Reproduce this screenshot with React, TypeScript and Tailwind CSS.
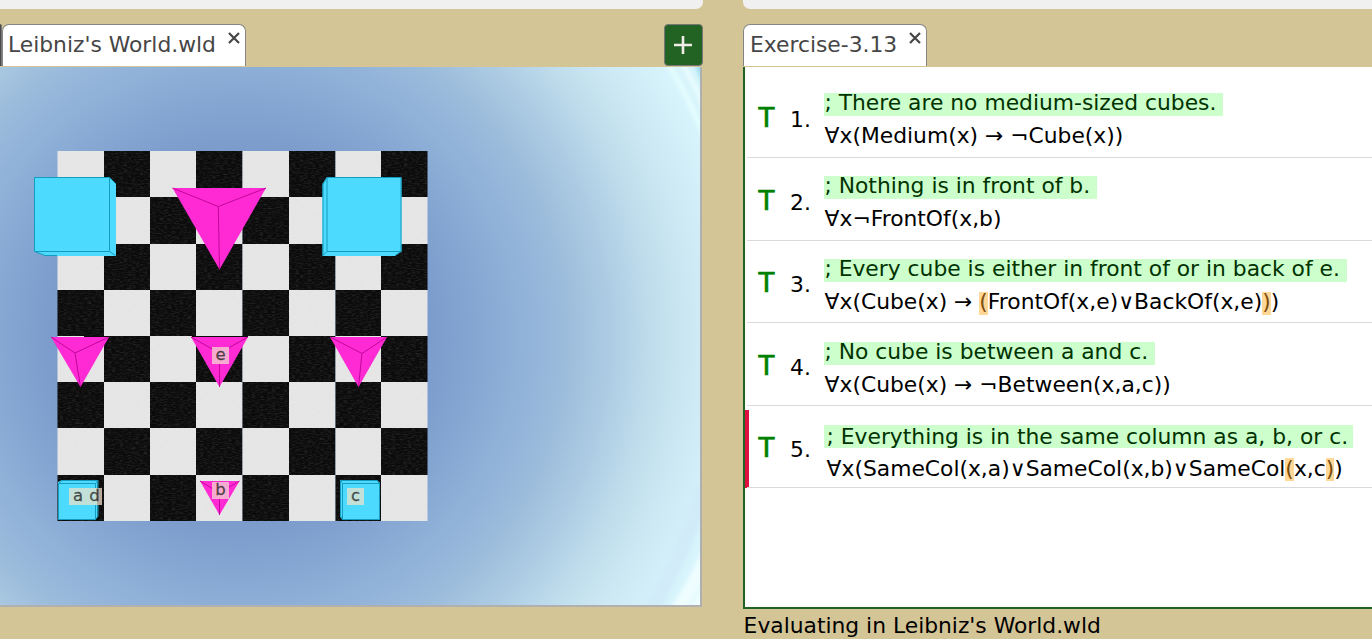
import React from "react";

type Part = { text: string; match?: boolean };
type Sentence = { comment: string; formula: Part[]; active?: boolean };

const sentences: Sentence[] = [
  { comment: "; There are no medium-sized cubes.", formula: [{ text: "∀x(Medium(x) → ¬Cube(x))" }] },
  { comment: "; Nothing is in front of b.", formula: [{ text: "∀x¬FrontOf(x,b)" }] },
  {
    comment: "; Every cube is either in front of or in back of e.",
    formula: [
      { text: "∀x(Cube(x) → " },
      { text: "(", match: true },
      { text: "FrontOf(x,e)∨BackOf(x,e)" },
      { text: ")", match: true },
      { text: ")" },
    ],
  },
  { comment: "; No cube is between a and c.", formula: [{ text: "∀x(Cube(x) → ¬Between(x,a,c))" }] },
  {
    comment: "; Everything is in the same column as a, b, or c.",
    formula: [
      { text: "∀x(SameCol(x,a)∨SameCol(x,b)∨SameCol" },
      { text: "(", match: true },
      { text: "x,c" },
      { text: ")", match: true },
      { text: ")" },
    ],
    active: true,
  },
];

const rowHeights = ["h-[91px]", "h-[83px]", "h-[82px]", "h-[83px]", "h-[82px]"];
const rowPads = ["pt-[26px]", "pt-[18px]", "pt-[18px]", "pt-[19px]", "pt-[19px]"];
const numberLeading = ["leading-[54px]", "leading-[54px]", "leading-[52px]", "leading-[52px]", "leading-[49px]"];
const valueLeading = ["leading-[50px]", "leading-[50px]", "leading-[48px]", "leading-[48px]", "leading-[46px]"];

const colEdges = [57.5, 104, 150, 196, 242.5, 289, 335.5, 381, 427.5];
const rowEdges = [84, 130, 177, 223, 269, 315, 361, 408, 454];

function Tetra({ pts, apex }: { pts: [number, number][]; apex: [number, number] }) {
  return (
    <g>
      <polygon points={pts.map((p) => p.join(",")).join(" ")} fill="#ff2ad4" />
      {pts.map((p, i) => (
        <line key={i} x1={p[0]} y1={p[1]} x2={apex[0]} y2={apex[1]} stroke="#c0069a" strokeWidth="1" />
      ))}
    </g>
  );
}

function Scene() {
  return (
    <svg className="block" width="700" height="538" viewBox="0 0 700 538">
      <defs>
        <radialGradient id="sky" gradientUnits="userSpaceOnUse" cx="240" cy="269" r="500">
          <stop offset="0.36" stopColor="#7a9bcb" />
          <stop offset="0.46" stopColor="#84a5d1" />
          <stop offset="0.56" stopColor="#90b1d8" />
          <stop offset="0.66" stopColor="#9dbddc" />
          <stop offset="0.74" stopColor="#adcce3" />
          <stop offset="0.82" stopColor="#bfdcec" />
          <stop offset="0.9" stopColor="#cce8f3" />
          <stop offset="1" stopColor="#d7f4fc" />
        </radialGradient>
        <filter id="soft" x="-50%" y="-20%" width="200%" height="140%">
          <feGaussianBlur stdDeviation="2.2" />
        </filter>
        <filter id="grain" x="0" y="0" width="100%" height="100%" colorInterpolationFilters="sRGB">
          <feTurbulence type="fractalNoise" baseFrequency="0.25 0.8" numOctaves="2" seed="4" />
          <feColorMatrix values="0 0 0 0 1  0 0 0 0 1  0 0 0 0 1  0.24 0 0 0 -0.1" />
        </filter>
      </defs>
      <rect width="700" height="538" fill="url(#sky)" />
      <g fill="none" filter="url(#soft)">
        <path d="M667 -5 Q689 30 703 66" stroke="#e6feff" strokeWidth="5" />
        <path d="M681 -5 Q695 17 705 43" stroke="#effeff" strokeWidth="4" />
        <path d="M697 -5 L706 18" stroke="#83d5ed" strokeWidth="4" />
        <path d="M704 420 Q684 490 650 545" stroke="#cfeaf8" strokeWidth="14" opacity="0.8" />
        <path d="M706 472 Q692 510 667 546 H712 V472Z" fill="#effdff" />
        <path d="M707 504 Q700 523 686 544" stroke="#dff8fd" strokeWidth="3" />
      </g>
      <g>
        {rowEdges.slice(0, 8).map((y, r) =>
          colEdges.slice(0, 8).map((x, c) => (
            <rect
              key={`${r}-${c}`}
              x={x}
              y={y}
              width={colEdges[c + 1] - x}
              height={rowEdges[r + 1] - y}
              fill={(r + c) % 2 === 0 ? "#e5e5e5" : "#0b0b0b"}
            />
          )),
        )}
      </g>
      <rect x="58" y="84" width="369" height="370" filter="url(#grain)" />
      <g strokeWidth="1" stroke="#159bbd" fill="#4cdbff">
        <path d="M34 110.500 H109.500 L116 117 V189 H46 L34 184.500Z" stroke="none" />
        <path d="M34.500 110.500 H109.500 V184.500 H34.500Z" />
        <path d="M109.500 110.500 L116 117 M109.500 184.500 L115.500 188.500 M34.500 184.500 L45 188.500 H57" fill="none" />
        <path d="M322.500 117 L326.500 110.500 H401.500 V184.500 L395 189 H322.500Z" stroke="none" />
        <path d="M327 110.500 H401 V184.500 H327Z" />
        <path d="M327 110.500 L323 117 V188.500 L327 184.500 M401 184.500 L395 188.500" fill="none" />
        <path d="M58 415 L62 413 H97.500 V449.500 L95.500 452.500 H58Z" stroke="none" />
        <path d="M58.500 416.500 H95.500 V452.500 H58.500Z" />
        <path d="M58.500 416.500 L62 413.500 H98 L95.500 416.500 M98 413.500 V449 L95.500 452.500" fill="none" />
        <path d="M340 413 H377 L380 416 V452.500 H342 L340 449.500Z" stroke="none" />
        <path d="M342.500 416.500 H379.500 V452.500 H342.500Z" />
        <path d="M342.500 416.500 L340.500 413.500 H377 L379.500 416.500 M340.500 413.500 V449 L342.500 452.500" fill="none" />
      </g>
      <path d="M84 269.500 H109 M192 269.500 H248" stroke="#0b0b0b" />
      <Tetra pts={[[172.5, 121], [266, 121], [219.500, 202.500]]} apex={[218.300, 139.500]} />
      <Tetra pts={[[51, 270], [109, 270], [80.500, 320]]} apex={[75, 286]} />
      <Tetra pts={[[191, 270], [248, 270], [219.500, 320]]} apex={[219.500, 286]} />
      <Tetra pts={[[330, 270], [387, 270], [358.500, 320]]} apex={[362, 286.500]} />
      <Tetra pts={[[200, 414], [239.500, 414], [219.500, 448]]} apex={[219.500, 426]} />
    </svg>
  );
}

const tag =
  "absolute flex items-center h-[17px] text-[16.5px] leading-none text-[#202020]/75 font-['DejaVu_Sans',sans-serif] whitespace-pre [-webkit-text-stroke:0.3px]";

function CloseIcon({ className }: { className: string }) {
  return (
    <svg className={className} width="12" height="12" viewBox="0 0 12 12" stroke="#464646" strokeWidth="2.2" fill="none">
      <path d="M1 1 L11 11 M11 1 L1 11" />
    </svg>
  );
}

export default function App() {
  return (
    <div className="flex h-[639px] w-[1372px] overflow-hidden bg-[#d4c597] font-['DejaVu_Sans',sans-serif] text-[21.82px] text-black">
      <section className="mr-[40px] flex w-[703px] shrink-0 flex-col">
        <div className="h-[9px] shrink-0 rounded-br-[7px] bg-[#f0f0f0]" />
        <div className="mt-[15px] flex h-[43px] shrink-0 pb-px">
          <div className="w-[2px] rounded-tr-[4px] border-r border-[#777] bg-[#4c4c4c]" />
          <div className="flex w-[244px] rounded-t-[7px] border border-b-0 border-[#858585] bg-white pl-[5px]">
            <span className="mt-[3px] whitespace-nowrap leading-[33px] text-[#464646]">Leibniz's World.wld</span>
            <CloseIcon className="ml-auto mr-[5px] mt-[7px]" />
          </div>
          <button className="ml-auto flex w-[39px] items-center justify-center rounded-[4px] border border-[#777] bg-[#226223]">
            <svg width="18" height="18" viewBox="0 0 18 18" stroke="#eeeee6" strokeWidth="2.600" className="mr-[2px]">
              <path d="M0 9 H18 M9 0 V18" />
            </svg>
          </button>
        </div>
        <div className="relative h-[540px] w-[702px] shrink-0 overflow-hidden border-r-2 border-b-2 border-[#b0b0b0]">
          <Scene />
          <div className={`${tag} left-[69px] top-[421px] w-[33px] bg-linear-to-r from-[#c3e0d8] from-85% to-[#b9ab9b] to-85% pl-[4px] tracking-[0.4px]`}>a d</div>
          <div className={`${tag} left-[212px] top-[280px] w-[17px] justify-center bg-[#f6acd0]`}>e</div>
          <div className={`${tag} left-[212px] top-[415px] w-[17px] justify-center bg-[#f6acd0]`}>b</div>
          <div className={`${tag} left-[347px] top-[421px] w-[17px] justify-center bg-[#c3e0d8]`}>c</div>
        </div>
      </section>

      <section className="flex w-[629px] shrink-0 flex-col">
        <div className="h-[9px] shrink-0 rounded-bl-[7px] bg-[#f0f0f0]" />
        <div className="mt-[15px] flex h-[43px] shrink-0 pb-px">
          <div className="flex w-[184px] rounded-t-[7px] border border-b-0 border-[#858585] bg-white pl-[6px]">
            <span className="mt-[3px] whitespace-nowrap leading-[33px] text-[#464646]">Exercise-3.13</span>
            <CloseIcon className="ml-auto mr-[5px] mt-[7px]" />
          </div>
        </div>
        <div className="h-[542px] shrink-0 border-b-2 border-l-2 border-[#226223] bg-white">
          {sentences.map((s, i) => (
            <div key={i} className={`relative flex items-start ${rowHeights[i]} ${rowPads[i]}`}>
              {s.active && <div className="absolute bottom-0 left-0 h-[78px] w-[4px] bg-[#df0f3f]" />}
              <div className="absolute bottom-0 left-[2px] right-0 h-px bg-[#dadada]" />
              <span className={`ml-[13.5px] w-[18.5px] text-[26px] text-[#008000] [-webkit-text-stroke:0.7px_#008000] ${valueLeading[i]}`}>T</span>
              <span className={`ml-[13px] w-[34px] ${numberLeading[i]}`}>{i + 1}.</span>
              <div className="whitespace-pre">
                <div className={`h-[23px] w-max bg-[#ccffcc] text-[#003300] ${s.active ? "pr-[5px] pl-[2.5px] leading-[23px]" : "pr-[7px] pl-[0.4px] leading-[20px]"}`}>
                  {s.comment}
                </div>
                <div className={`mt-[10px] flex h-[23px] ${s.active ? "pl-[2.6px] leading-[22px]" : "pl-[0.6px] leading-[20px]"}`}>
                  {s.formula.map((p, k) => (
                    <span key={k} className={p.match ? "bg-[#ffd796] text-[#7a4d0d]" : ""}>
                      {p.text}
                    </span>
                  ))}
                </div>
              </div>
            </div>
          ))}
        </div>
        <div className="pl-[0.6px] leading-[33px]">Evaluating in Leibniz's World.wld</div>
      </section>
    </div>
  );
}
